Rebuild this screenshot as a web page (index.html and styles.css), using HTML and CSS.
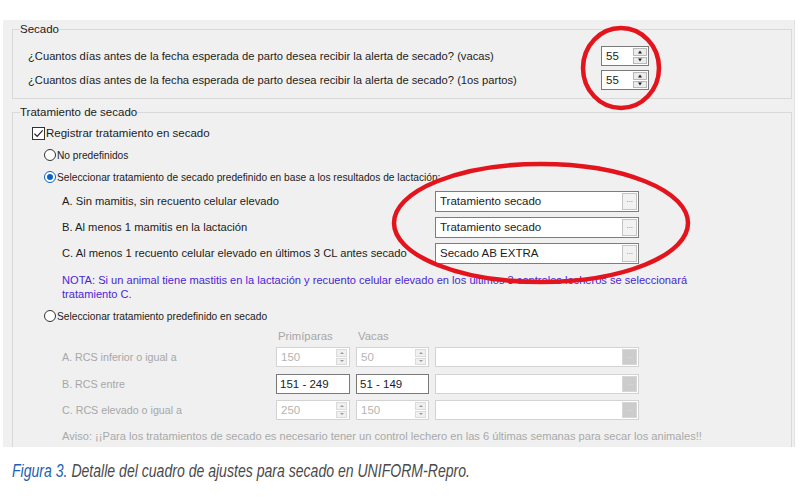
FILE: index.html
```html
<!DOCTYPE html>
<html lang="es">
<head>
<meta charset="utf-8">
<title>Secado</title>
<link rel="stylesheet" href="styles.css">
</head>
<body>
<div class="page">
  <div class="panel">
    <fieldset class="grp grp-secado">
      <legend>Secado</legend>
      <div class="q-row">
        <span class="q-label">¿Cuantos días antes de la fecha esperada de parto desea recibir la alerta de secado? (vacas)</span>
        <div class="spin spin-q"><span class="spin-val">55</span><span class="spin-btns"><i class="up"></i><i class="down"></i></span></div>
      </div>
      <div class="q-row">
        <span class="q-label">¿Cuantos días antes de la fecha esperada de parto desea recibir la alerta de secado? (1os partos)</span>
        <div class="spin spin-q"><span class="spin-val">55</span><span class="spin-btns"><i class="up"></i><i class="down"></i></span></div>
      </div>
    </fieldset>

    <fieldset class="grp grp-trat">
      <legend>Tratamiento de secado</legend>
      <div class="chk-row">
        <span class="chk"><svg viewBox="0 0 13 13" width="13" height="13"><path d="M2.5 6.8 L5.2 9.4 L10.6 3.4" fill="none" stroke="#222" stroke-width="1.2"/></svg></span>
        <span>Registrar tratamiento en secado</span>
      </div>
      <div class="radio-row"><span class="radio"></span><span>No predefinidos</span></div>
      <div class="radio-row"><span class="radio on"></span><span>Seleccionar tratamiento de secado predefinido en base a los resultados de lactación:</span></div>

      <div class="opt-row opt-first">
        <span class="opt-label">A. Sin mamitis, sin recuento celular elevado</span>
        <div class="pick"><span class="pick-val">Tratamiento secado</span><span class="dots">···</span></div>
      </div>
      <div class="opt-row">
        <span class="opt-label">B. Al menos 1 mamitis en la lactación</span>
        <div class="pick"><span class="pick-val">Tratamiento secado</span><span class="dots">···</span></div>
      </div>
      <div class="opt-row">
        <span class="opt-label">C. Al menos 1 recuento celular elevado en últimos 3 CL antes secado</span>
        <div class="pick"><span class="pick-val">Secado AB EXTRA</span><span class="dots">···</span></div>
      </div>

      <p class="nota">NOTA: Si un animal tiene mastitis en la lactación y recuento celular elevado en los últimos 3 controles lecheros se seleccionará tratamiento C.</p>

      <div class="radio-row radio-3"><span class="radio"></span><span>Seleccionar tratamiento predefinido en secado</span></div>

      <div class="rcs-grid">
        <span></span><span class="hdr">Primíparas</span><span class="hdr">Vacas</span><span></span>

        <span class="rcs-label">A. RCS inferior o igual a</span>
        <div class="spin spin-dis"><span class="spin-val">150</span><span class="spin-btns"><i class="up"></i><i class="down"></i></span></div>
        <div class="spin spin-dis"><span class="spin-val">50</span><span class="spin-btns"><i class="up"></i><i class="down"></i></span></div>
        <div class="pick pick-dis"><span class="pick-val"></span><span class="dots">···</span></div>

        <span class="rcs-label">B. RCS entre</span>
        <div class="field-on">151 - 249</div>
        <div class="field-on">51 - 149</div>
        <div class="pick pick-dis"><span class="pick-val"></span><span class="dots">···</span></div>

        <span class="rcs-label">C. RCS elevado o igual a</span>
        <div class="spin spin-dis"><span class="spin-val">250</span><span class="spin-btns"><i class="up"></i><i class="down"></i></span></div>
        <div class="spin spin-dis"><span class="spin-val">150</span><span class="spin-btns"><i class="up"></i><i class="down"></i></span></div>
        <div class="pick pick-dis"><span class="pick-val"></span><span class="dots">···</span></div>
      </div>

      <p class="aviso">Aviso: ¡¡Para los tratamientos de secado es necesario tener un control lechero en las 6 últimas semanas para secar los animales!!</p>
    </fieldset>
  </div>

  <p class="caption"><span class="fig">Figura 3.</span> Detalle del cuadro de ajustes para secado en UNIFORM-Repro.</p>

  <svg class="mark mark-1" width="90" height="90" viewBox="0 0 90 90"><ellipse cx="45" cy="45" rx="38" ry="40" fill="none" stroke="#e3141c" stroke-width="4.5"/></svg>
  <svg class="mark mark-2" width="310" height="130" viewBox="0 0 310 130"><ellipse cx="155" cy="65" rx="147" ry="59" fill="none" stroke="#e3141c" stroke-width="4.5"/></svg>
</div>
</body>
</html>
```

FILE: styles.css
```css
html, body {
  margin: 0;
  padding: 0;
  background: #ffffff;
}

.page {
  position: relative;
  width: 800px;
  height: 500px;
  font-family: "Liberation Sans", Arial, sans-serif;
  color: #1c1c1c;
  overflow: hidden;
}

.panel {
  margin: 20px 5px 0 3px;
  height: 427px;
  background: #f0f0f0;
  border-right: 1px solid #e2e2e2;
  overflow: hidden;
  padding-top: 2px;
  box-sizing: border-box;
}

.grp {
  margin: 0 2px 0 9px;
  padding: 0 0 0 7px;
  border: 1px solid #d9d9d9;
  min-width: 0;
}

.grp legend {
  padding: 0;
  font-size: 11.5px;
  line-height: 15px;
  color: #1c1c1c;
}

/* Secado */
.grp-secado {
  padding-top: 7px;
  padding-bottom: 6px;
}

.q-row {
  display: flex;
  align-items: center;
  height: 24px;
  padding-left: 8px;
}

.q-label {
  width: 573px;
  font-size: 11.2px;
  white-space: nowrap;
}

.spin {
  display: flex;
  align-items: center;
  justify-content: space-between;
  height: 20px;
  box-sizing: border-box;
  background: #ffffff;
  border: 1px solid #7a7a7a;
  padding: 0 1px 0 4px;
  font-size: 11.5px;
}

.spin-q {
  width: 48px;
}

.spin-btns {
  display: flex;
  flex-direction: column;
  gap: 1px;
  width: 14px;
  height: 16px;
}

.spin-btns i {
  flex: 1;
  position: relative;
  background: #ececec;
  border: 1px solid #b8b8b8;
}

.spin-btns i::after {
  content: "";
  position: absolute;
  left: 50%;
  top: 50%;
  transform: translate(-50%, -50%);
  border-left: 2.5px solid transparent;
  border-right: 2.5px solid transparent;
}

.spin-btns .up::after {
  border-bottom: 3px solid #222;
}

.spin-btns .down::after {
  border-top: 3px solid #222;
}

/* Tratamiento */
.grp-trat {
  margin-top: 6px;
  padding-top: 3px;
  padding-bottom: 40px;
  border-bottom: none;
}

.chk-row {
  display: flex;
  align-items: center;
  gap: 1px;
  height: 20px;
  padding-left: 12px;
  font-size: 11.5px;
}

.chk {
  width: 13px;
  height: 13px;
  box-sizing: border-box;
  border: 1px solid #333;
  background: #fff;
  display: flex;
}

.chk svg {
  margin: -1px;
}

.radio-row {
  display: flex;
  align-items: center;
  gap: 1px;
  height: 20px;
  margin-top: 2px;
  padding-left: 24px;
  font-size: 10.2px;
  color: #1c1c1c;
}

.radio {
  width: 12px;
  height: 12px;
  box-sizing: border-box;
  border: 1px solid #333;
  border-radius: 50%;
  background: #fff;
  display: flex;
  align-items: center;
  justify-content: center;
}

.radio.on {
  border-color: #0a64c8;
}

.radio.on::after {
  content: "";
  width: 6px;
  height: 6px;
  border-radius: 50%;
  background: #0a64c8;
}

.opt-row {
  display: flex;
  align-items: center;
  height: 20px;
  margin-top: 6px;
  padding-left: 42px;
}

.opt-first {
  margin-top: 4px;
}

.opt-label {
  width: 373px;
  font-size: 11.2px;
  white-space: nowrap;
}

.pick {
  display: flex;
  align-items: center;
  width: 204px;
  height: 21px;
  box-sizing: border-box;
  background: #fff;
  border: 1px solid #7d7d7d;
  padding: 1px 1px 1px 4px;
}

.pick-val {
  flex: 1;
  font-size: 11.5px;
}

.dots {
  width: 15px;
  height: 100%;
  box-sizing: border-box;
  border: 1px solid #c4c4c4;
  background: #f2f2f2;
  color: #777;
  font-size: 8px;
  line-height: 15px;
  text-align: center;
  letter-spacing: -0.5px;
}

.nota {
  margin: 10px 0 0;
  padding-left: 42px;
  width: 645px;
  font-size: 11.1px;
  line-height: 14px;
  color: #4a1fd8;
}

.radio-3 {
  margin-top: 5px;
}

.rcs-grid {
  display: grid;
  grid-template-columns: 208px 74px 73px 202px;
  column-gap: 6px;
  row-gap: 6.5px;
  align-items: center;
  margin-top: 3px;
  padding-left: 42px;
  color: #a7a7a7;
}

.rcs-grid .hdr {
  font-size: 11.3px;
  line-height: 14px;
  padding-left: 2px;
  margin-bottom: -2.5px;
}

.rcs-label {
  font-size: 10.7px;
}

.spin-dis {
  border-color: #d3d3d3;
  color: #b4b4b4;
  font-size: 11.5px;
  padding-right: 2px;
}

.spin-dis .spin-btns {
  width: 11px;
}

.spin-dis .spin-btns i {
  background: #f0f0f0;
  border-color: #dadada;
}

.spin-dis .spin-btns .up::after {
  border-bottom-color: #9a9a9a;
  border-bottom-width: 2.5px;
  border-left-width: 2px;
  border-right-width: 2px;
}

.spin-dis .spin-btns .down::after {
  border-top-color: #9a9a9a;
  border-top-width: 2.5px;
  border-left-width: 2px;
  border-right-width: 2px;
}

.field-on {
  height: 20px;
  box-sizing: border-box;
  border: 1px solid #7a7a7a;
  background: #fff;
  color: #1c1c1c;
  font-size: 11.5px;
  line-height: 18px;
  padding-left: 3px;
}

.pick-dis {
  border-color: #d3d3d3;
  height: 20px;
}

.pick-dis .dots {
  background: #cccccc;
  border-color: #d6d6d6;
  color: #e0e0e0;
}

.aviso {
  margin: 9px 0 0;
  padding-left: 42px;
  font-size: 11.1px;
  line-height: 14px;
  color: #a9a9a9;
  white-space: nowrap;
}

.caption {
  margin: 13px 0 0 12px;
  font-family: "Liberation Sans", Arial, sans-serif;
  font-style: italic;
  font-size: 19px;
  line-height: 22px;
  color: #4a4a4a;
  white-space: nowrap;
  transform: scaleX(0.74);
  transform-origin: left center;
}

.caption .fig {
  color: #1b62b0;
}

.mark {
  position: absolute;
  pointer-events: none;
}

.mark-1 {
  left: 576px;
  top: 23px;
}

.mark-2 {
  left: 386px;
  top: 158px;
}
```
